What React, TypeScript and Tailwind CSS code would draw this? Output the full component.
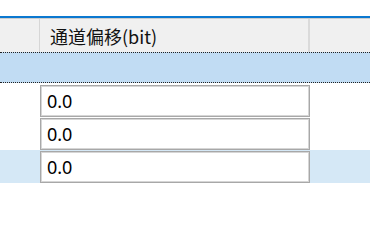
function Cell({ value }: { value: string }) {
  return (
    <div className="h-[32px] border border-[#a8a8a8] shadow-[inset_0_0_0_1px_#d6d6d6] bg-white flex items-center pl-[6px] font-['Noto_Sans','Noto_Sans_CJK_SC',sans-serif] text-[18px] text-black leading-none">
      {value}
    </div>
  );
}

export default function App() {
  return (
    <div className="w-[370px] h-[213px] bg-white pt-4 overflow-hidden">
      <div className="h-[2px] bg-[#0b78d0]" />
      <div className="h-px bg-[#cdcdcd]" />
      <div className="grid grid-cols-[40px_270px_1fr] h-[33px] bg-[#f0f0f0]">
        <div className="border-r border-[#d6d6d6]" />
        <div className="border-r-2 border-[#dadada] flex items-center pl-[10px] font-['Noto_Sans_CJK_SC',sans-serif] text-[18px] text-[#111] leading-none">
          通道偏移(bit)
        </div>
        <div />
      </div>
      <div className="h-[31px] bg-[#c1dcf3] border-y border-dotted border-[#222]" />
      <div className="grid grid-cols-[40px_270px_1fr] h-[34px] pt-[2px]">
        <div />
        <Cell value="0.0" />
        <div />
      </div>
      <div className="grid grid-cols-[40px_270px_1fr] h-[33px] pt-px">
        <div />
        <Cell value="0.0" />
        <div />
      </div>
      <div className="grid grid-cols-[40px_270px_1fr] h-[33px] pt-px bg-[#d5e8f6]">
        <div />
        <Cell value="0.0" />
        <div />
      </div>
    </div>
  );
}
